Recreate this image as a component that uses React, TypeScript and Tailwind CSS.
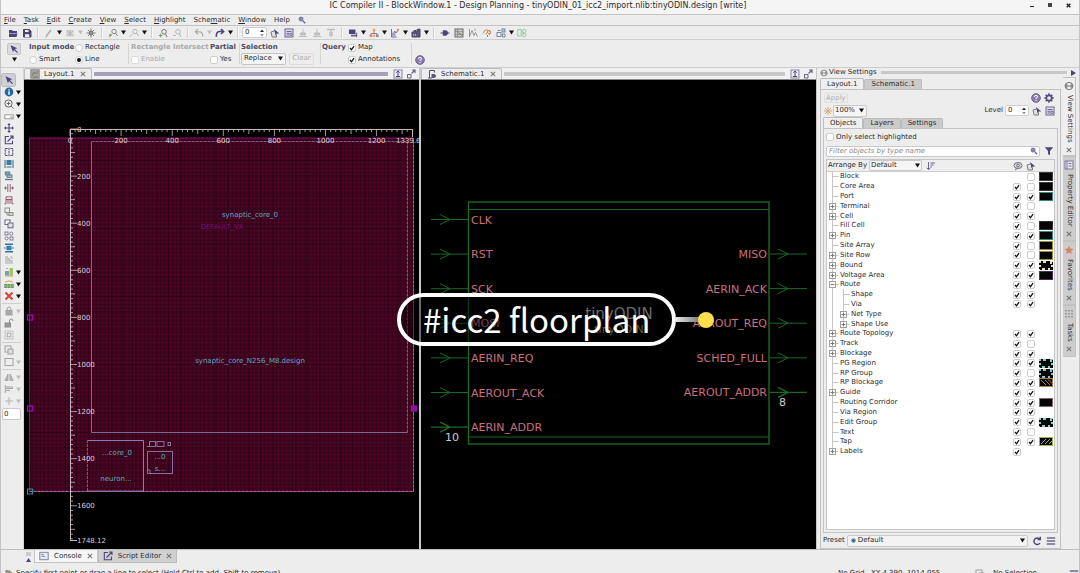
import { useState } from 'react'
import type { ReactNode } from 'react'
import clsx from 'clsx'

const VIOLET = '#4d4378'
const GREY = '#b4b4b4'

// 10x10 glyph box shared by every toolbar icon
function Glyph({ children, color = VIOLET, size = 'size-[10px]' }: { children: ReactNode; color?: string; size?: string }) {
  return (
    <svg viewBox="0 0 10 10" className={clsx(size, 'shrink-0')} fill="none" stroke={color} strokeWidth="1">
      {children}
    </svg>
  )
}

const icons: Record<string, ReactNode> = {
  folder: <Glyph><path d="M1 2h3l1 1h4v2H1z" fill={VIOLET} stroke="none" /><path d="M1 5.5h8.5L8.5 9H1z" fill={VIOLET} stroke="none" /></Glyph>,
  save: <Glyph><path d="M1.5 1.5h6l1.5 1.5v6H1.5z" fill={VIOLET} /><path d="M3 2h3.5v2H3zM3 6.2h4.2V9H3z" fill="#efeff4" stroke="none" /></Glyph>,
  pencil: <Glyph color={GREY}><path d="M2 8.5 7 2" strokeWidth="1.8" /><path d="M1.5 9.2h1.6" /></Glyph>,
  mesh: <Glyph color={GREY}><rect x="1" y="2" width="8" height="6.5" fill="#d8d8d8" stroke="none" /><path d="M2 3l6 5M8 3 2 8M5 2v6.5" /></Glyph>,
  burst: <Glyph color="#555"><path d="M5 .5v9M.5 5h9M2 2l6 6M8 2 2 8" strokeWidth=".8" /><circle cx="5" cy="5" r="1.3" fill="#eee" /></Glyph>,
  zoomNode: <Glyph color="#8a8a80"><circle cx="6" cy="3.5" r="2.2" /><path d="M7.5 5l2 3M3.5 6l-2 2.5" /><path d="M.8 7.2h3M2.3 5.7v3" stroke="#8b9a6a" /></Glyph>,
  zoomNodeOff: <Glyph color={GREY}><circle cx="6" cy="3.5" r="2.2" /><path d="M7.5 5l2 3M3.5 6l-3 3" /></Glyph>,
  nodeAdd: <Glyph color="#777"><circle cx="6" cy="3.8" r="2.3" /><path d="M7.5 6l1.5 3" /><path d="M.8 7.5h3.6M2.6 5.8v3.6" stroke="#6fa06f" /></Glyph>,
  nodeOff: <Glyph color={GREY}><circle cx="6" cy="3.8" r="2.3" /><path d="M7.5 6l1.5 3M1 7.5h3" /></Glyph>,
  undo: <Glyph color="#aaa"><path d="M1.5 3.8h4.5q2.7 0 2.7 4.7M3.8 1.2 1.3 3.8l2.5 2.4" strokeWidth="1.2" /></Glyph>,
  redo: <Glyph><path d="M8.5 3.5H4.2Q1.3 3.5 1.3 8.8M6 1l2.6 2.5L6 6" strokeWidth="1.6" /></Glyph>,
  select: <Glyph color="#777"><path d="M1 4 4.5 3M1 4l1.2 5h4.3V6.5" fill="#e4e4e4" /><path d="M4 1l5.3 4.6-2.5-.1-1.2 2z" fill={VIOLET} stroke="none" /></Glyph>,
  props: <Glyph color="#6d6591"><rect x="1" y="1" width="8" height="8" fill="#e3e0ee" /><path d="M2.5 3.5h5M2.5 5.3h3M2.5 7h3" /><circle cx="7" cy="6.3" r="1.2" /></Glyph>,
  down: <Glyph color="#bdbdbd"><path d="M1 8.5h8M5 1v6M2.5 5h5v2h-5z" fill="#c4c4c4" /></Glyph>,
  downT: <Glyph color="#bdbdbd"><path d="M1 1.5h8M5 2v7M3 5h4M3 7h4" strokeWidth="1.3" /></Glyph>,
  chat: <Glyph><path d="M1 1.5h6.5V6H1z" fill={VIOLET} stroke="none" /><path d="M3 6.8h4.6l1.6-3v5l-1 .6V8.5H3z" fill="#6a6192" stroke="none" /></Glyph>,
  tree: <Glyph color="#9a7f86"><path d="M5 3v2.5M2 7.5V5.5h6v2" /><circle cx="5" cy="2" r="1.5" fill="#e5a76b" stroke="none" /><rect x=".6" y="6.4" width="2.8" height="2.6" fill="#e08a72" stroke="none" /><rect x="4" y="6.4" width="2.2" height="2.6" fill="#e9b36f" stroke="none" /><rect x="7" y="6.4" width="2.6" height="2.6" fill="#8f86ad" stroke="none" /></Glyph>,
  marks: <Glyph color="#736a9c"><path d="M1.5 1v8h5M3.5 6l1-3 1.5 2 2-3" /><circle cx="8" cy="2" r="1.2" fill="#d98d84" stroke="none" /><rect x="2" y="4.5" width="3.5" height="4" fill="#a9a2c6" stroke="none" /></Glyph>,
  chip: <Glyph color="#4b4763"><path d="M1 4h2V2.5h2V4h1V1.5l3-.5v8H1z" fill="#5b5675" /><path d="M2.5 6v2M4.5 6v2" stroke="#b6b2c8" /></Glyph>,
  gate: <Glyph><path d="M.5 5h9" /><path d="M2.8 2.3h2.5Q8 2.6 8 5T5.3 7.7H2.8z" fill={VIOLET} stroke="none" /></Glyph>,
  table: <Glyph color="#6c6c6c"><rect x="1" y="1" width="8" height="8" fill="#cfcfcf" /><path d="M1 3.6h8M1 6.3h8M3.6 1v8" strokeWidth=".6" /><path d="M4.5 4.5l3.5 3" /></Glyph>,
  wave: <Glyph color="#8b8b93"><path d="M1.5 1v8M1.5 8.5l2.5-6 2 5 1.5-3 2 4" strokeWidth=".9" /><path d="M6 2h2" stroke="#86a886" /></Glyph>,
  pulse: <Glyph color="#d08c5f"><path d="M1 5.5 3 2h3l3 2.5L7 7M4 6.5l1.7-3" /><circle cx="7" cy="4" r="1.6" /><path d="M5.5 9V7" stroke="#d2724f" /></Glyph>,
  parts: <Glyph color="#7b8aa5"><rect x="1" y="4.5" width="4" height="4" /><rect x="6" y="1" width="3" height="3" fill="#b8c8dd" /><path d="M1.5 2.5h3M6.5 6h2.5v3H6.5z" /></Glyph>,
  flow: <Glyph color="#9cc7a4"><rect x=".8" y="1.5" width="3.4" height="6.5" /><circle cx="7.3" cy="3" r="1.7" /><circle cx="7.3" cy="7" r="1.7" /><path d="M4 5h2" /></Glyph>,
  cursor: <Glyph><path d="M1.5 1.3 8.3 4.2 5.8 5.1 9 8.4 8.1 9 5 5.9 4 8.3z" fill={VIOLET} stroke="none" /></Glyph>,
  info: <Glyph><circle cx="5" cy="5" r="4.4" fill="#24699a" stroke="none" /><path d="M5 4.3v3.4M5 2.2v1.2" stroke="#fff" strokeWidth="1.4" /></Glyph>,
  zoom: <Glyph color="#666"><circle cx="4.5" cy="4.5" r="3.6" /><path d="M2.8 4.5h3.4M4.5 2.8v3.4M7.2 7.2 9.5 9.5" /></Glyph>,
  ruler: <Glyph color="#999"><rect x=".8" y="3.8" width="8.4" height="4" fill="#fff" /><path d="M6 6h2v2" /></Glyph>,
  move: <Glyph><path d="M5 1v8M1 5h8" strokeWidth="1.1" /><path d="M5 0l1.7 2H3.3zM5 10l1.7-2H3.3zM0 5l2-1.7v3.4zM10 5 8 3.3v3.4z" fill={VIOLET} stroke="none" /></Glyph>,
  resize: <Glyph><path d="M5 1.5H1.3v7.2h7.2V5.5M3.5 6.5 9 1M6 1h3v3" strokeWidth="1.1" /></Glyph>,
  flip: <Glyph><path d="M3.5 1.5H1.2v7h2.3M6.5 1.5h2.3v7H6.5M5 .8v8.4" strokeDasharray="2.4 .7" /></Glyph>,
  align: <Glyph color="#2c6f96"><path d="M1 1v8M9 1v8" /><rect x="2.5" y="1" width="5" height="5" fill="#46789c" stroke="none" /><path d="M2.5 8h5" /></Glyph>,
  stack: <Glyph color="#5f7b8c"><rect x="1.3" y="1" width="4.5" height="2.8" fill="#7fa8bd" /><rect x="3" y="4" width="5" height="2.3" fill="#b4cfa9" /><path d="M1 8.5h8" strokeWidth="1.4" /></Glyph>,
  split: <Glyph color="#8d6b74"><path d="M3.8 1v8M6.2 1v8M0 5h3.5M6.5 5H10M1.5 3.5v3M8.5 3.5v3" /></Glyph>,
  bridge: <Glyph color="#8c4b5d"><path d="M.5 8.8H2V1.8h6v7h1.5M2 4.5h6M4 4.5v4.3M6 4.5v4.3" strokeWidth=".9" /></Glyph>,
  copyGroup: <Glyph color="#8f8f8f"><rect x="1" y="1" width="4.5" height="4.5" /><rect x="5" y="5.5" width="4" height="3" fill="#ddd6b8" /><path d="M3 5.5v2.5h2" /></Glyph>,
  copy: <Glyph color="#666a80"><rect x="1" y="1" width="5" height="4.5" fill="#fff" /><rect x="4" y="4" width="5" height="4.8" fill="#dfe3ea" /></Glyph>,
  quad: <Glyph color="#877e98"><rect x="1" y="1" width="3" height="3" /><circle cx="7.3" cy="2.6" r="1.6" /><circle cx="2.6" cy="7.4" r="1.6" /><rect x="6" y="6" width="3" height="3" /></Glyph>,
  compress: <Glyph color="#2e78a3"><path d="M1 1.3h8M1 8.7h8" strokeWidth="1.4" /><rect x="3" y="3.3" width="4" height="3.4" fill="#3a80a8" /><path d="M0 5h2M8 5h2" /></Glyph>,
  corner: <Glyph color="#b0b0b0"><path d="M1 1h3v2h2v2h3v4H1z" fill="#c9c9c9" stroke="none" /><path d="M3 2l4 4M7 1v2h2" /></Glyph>,
  bars: <Glyph><rect x="1" y="4" width="4" height="4.5" fill="#6fa7a9" stroke="none" /><rect x="5.5" y="1" width="3.5" height="7.5" fill="#a7bd6f" stroke="none" /><path d="M2 1.5h2M1 9h8" stroke="#d9a24f" /></Glyph>,
  row: <Glyph color="#6d9a62"><rect x=".8" y="5.5" width="2" height="3" fill="#9fc08e" /><rect x="4" y="5.5" width="2" height="3" fill="#9fc08e" /><rect x="7.2" y="5.5" width="2" height="3" fill="#9fc08e" /><path d="M1 3.3q4-3 8 0" stroke="#d5a14b" /></Glyph>,
  cross: <Glyph color="#cf4c43"><path d="M1.5 1.5l7 7M8.5 1.5l-7 7" strokeWidth="2.2" /></Glyph>,
  lock: <Glyph color="#a0a0a0"><rect x="2" y="4.5" width="6" height="4.5" fill="#a9a9a9" /><path d="M3.2 4.5V3q0-2 1.8-2t1.8 2v1.5" /></Glyph>,
  unlock: <Glyph color="#8d8d8d"><rect x="1" y="5" width="5.5" height="4" fill="#999" /><path d="M5.5 5V3q0-2 1.8-2t1.7 2" /></Glyph>,
  chipOff: <Glyph color="#aaa"><rect x="1" y="1" width="8" height="8" strokeDasharray="1 .6" /><rect x="3.2" y="3.2" width="3.6" height="3.6" /></Glyph>,
  copyOff: <Glyph color="#a0a0a0"><rect x="1" y="1" width="6" height="6" /><rect x="4" y="4" width="5" height="5" fill="#ddd" /></Glyph>,
  square: <Glyph color="#a3a3a3"><rect x="1" y="1.5" width="8" height="7" /></Glyph>,
  mirror: <Glyph color="#aaa"><path d="M4 2v6.5H.8zM6 2v6.5h3.2z" fill="#b4b4b4" /></Glyph>,
  alignOff: <Glyph color="#a4a4a4"><path d="M1.3 1v8M2 3h6.5v1.5H2M2 6.5h4" /></Glyph>,
  snap: <Glyph color="#b5b5b5"><path d="M5 1v2.5M5 6.5V9M1 5h2.5M6.5 5H9" /><circle cx="5" cy="5" r="1.2" /></Glyph>,
  split2: <Glyph color="#8b84a6"><rect x="1" y="1" width="8" height="8" fill="#ebe9f2" /><path d="M5 2v6M3.4 3.6 5 2l1.6 1.6M3 7.5h4" stroke="#4d4378" /></Glyph>,
  popout: <Glyph color="#6a6480"><path d="M1.5 5.5h3.500v3.500H1.5z" /><path d="M5.5 4.5 9 1M6 1h3v3" strokeWidth="1.2" /></Glyph>,
  help: <Glyph><circle cx="5" cy="5" r="4.3" fill="#8d7fae" stroke="#6c5c93" /><path d="M3.5 4q0-1.7 1.5-1.7T6.5 3.8Q6.5 4.8 5 5.3v.7M5 7v1.2" stroke="#fff" /></Glyph>,
  gear: <Glyph color="#54497f"><circle cx="5" cy="5" r="2.7" strokeWidth="1.7" /><path d="M5 .3v2M5 7.7v2M.3 5h2M7.7 5h2M1.7 1.7 3 3M7 7l1.3 1.3M8.3 1.7 7 3M3 7 1.7 8.3" strokeWidth="1.5" /></Glyph>,
  sun: <Glyph color="#e6a06a"><path d="M5 .8v8.4M.8 5h8.4M2 2l6 6M8 2 2 8" strokeWidth=".9" /></Glyph>,
  funnel: <Glyph><path d="M.8 1.3h8.4L6 5v4.2L4 8V5z" fill={VIOLET} stroke="none" /></Glyph>,
  sort: <Glyph color="#6a6591"><path d="M2.5 1v7.5M.8 6.8l1.7 1.9 1.7-1.9M4.5 2H9M4.5 4h3M4.5 6h1.5" /></Glyph>,
  eye: <Glyph color="#6e6e78"><ellipse cx="5" cy="4.5" rx="4" ry="3" fill="#dcdce2" /><circle cx="5" cy="4.5" r="1.4" /><path d="M2 9l3-2" /></Glyph>,
  reload: <Glyph><path d="M7.8 3.2A3.3 3.3 0 1 0 8 7M8.3.8v2.8H5.5" strokeWidth="1.4" /></Glyph>,
  menu: <Glyph color="#6d678b"><path d="M.8 2h8.4M.8 5h8.4M.8 8h8.4" strokeWidth="1.5" /></Glyph>,
  dock: <Glyph color="#777"><ellipse cx="5" cy="5" rx="4" ry="3.6" /><path d="M1 5h8M2.8 3v4M7.2 3v4" /></Glyph>,
  sheet: <Glyph color="#7d77a0"><rect x="1" y="1" width="8" height="8" fill="#e8e6f1" /><path d="M3 1v8M4.5 3.5h3M4.5 6h3" /></Glyph>,
  star: <Glyph><path d="M5 .6l1.3 3 3.2.3-2.4 2.2.7 3.2L5 7.6 2.2 9.3l.7-3.2L.5 3.9l3.2-.3z" fill="#d9826a" stroke="none" /></Glyph>,
  dots: <Glyph color="#8d8d9b"><path d="M2 1v8M5 1v8M8 1v8" strokeWidth="1.6" strokeDasharray="1.6 1.4" /></Glyph>,
  image: <Glyph color="#8a8a86"><rect x=".8" y=".8" width="8.4" height="8.4" fill="#a8a59b" /><path d="M2 7l2-4 2 2 2-3M3 8h5" stroke="#6f7a76" /></Glyph>,
  schem: <Glyph color="#5a5478"><path d="M2.5 9V1.500h5v2M1 9h4" /><path d="M4.500 5h2.500q2 .3 2 2T7 9H4.500z" fill="#5a5478" stroke="none" /></Glyph>,
  term: <Glyph color="#7f88a0"><rect x=".8" y="1.3" width="8.4" height="7.4" fill="#e6ebf3" /><path d="M2.5 3.5h2M2.5 5.3h3.5" /></Glyph>,
}

function SearchMark() {
  return (
    <Glyph color="#6b6591" size="size-[8px]">
      <circle cx="3.8" cy="3.8" r="2.5" fill="#8c86ab" />
      <path d="M5.8 5.8 9 9" strokeWidth="1.7" />
    </Glyph>
  )
}

function Cross() {
  return (
    <svg viewBox="0 0 6 6" className="size-[6px] shrink-0" fill="none" stroke="#777" strokeWidth="1.1">
      <path d="M.8.8l4.400 4.400M5.200.8.8 5.200" />
    </svg>
  )
}

function Arrow({ off }: { off?: boolean }) {
  return (
    <svg viewBox="0 0 6 5" className="h-[5px] w-[5px] shrink-0">
      <path d="M0 0h6L3 5z" fill={off ? '#bdbdbd' : '#111'} />
    </svg>
  )
}

function Check({ label, checked, off, bare, radio, name }: { label: string; checked?: boolean; off?: boolean; bare?: boolean; radio?: boolean; name?: string }) {
  const [on, setOn] = useState(!!checked)
  return (
    <label className={clsx('flex items-center gap-[2px]', off && 'text-[#a9a9a9]')}>
      <span className="grid size-2 shrink-0 place-items-center">
        <input
          type={radio ? 'radio' : 'checkbox'}
          name={name}
          aria-label={label}
          disabled={off}
          {...(radio ? { defaultChecked: checked } : { checked: on, onChange: () => setOn(!on) })}
          className={clsx(
            'peer col-start-1 row-start-1 size-2 appearance-none border bg-white',
            radio ? 'rounded-full' : 'rounded-[2px]',
            off ? 'border-[#dcdcdc]' : 'border-[#cdcdcd]',
          )}
        />
        {radio ? (
          <span className="pointer-events-none col-start-1 row-start-1 hidden size-1 rounded-full bg-[#111] peer-checked:block" />
        ) : (
          <svg viewBox="0 0 8 8" className="pointer-events-none col-start-1 row-start-1 hidden size-2 peer-checked:block" fill="none" stroke="#111" strokeWidth="1.3">
            <path d="M2 4l1.5 1.8L6 2.2" />
          </svg>
        )}
      </span>
      {!bare && label}
    </label>
  )
}

const menus: [string, string, string][] = [
  ['', 'F', 'ile'], ['', 'T', 'ask'], ['', 'E', 'dit'], ['', 'C', 'reate'], ['', 'V', 'iew'], ['', 'S', 'elect'],
  ['', 'H', 'ighlight'], ['Sche', 'm', 'atic'], ['', 'W', 'indow'], ['Help', '', ''],
]

// "v" is a drop-down arrow, "v-" a disabled one, "|" a group separator, "#" the level spinner
const toolbar = [
  'folder', 'save', '|', 'pencil', 'v', 'mesh', 'v-', 'burst', '|', 'zoomNode', 'v', 'zoomNodeOff', 'v', '|', 'nodeAdd', 'nodeOff', '|',
  'undo', 'v-', 'redo', 'v', '|', '#', 'select', 'props', 'down', 'down', 'downT', '|', 'chat', 'v', 'tree', 'v', 'marks', 'v', 'chip', 'v', '|',
  'gate', 'table', 'wave', 'pulse', 'parts', 'v', 'flow',
]

const sideTools: [string, string?][] = [
  ['cursor'], ['info', 'v'], ['zoom', 'v'], ['ruler', 'v'], ['move'], ['resize'], ['flip'], ['align'], ['stack'], ['split'], ['bridge'],
  ['copyGroup'], ['copy'], ['quad'], ['compress'], ['corner'], ['bars', 'v'], ['row', 'v'], ['cross', 'v'], ['|'],
  ['lock', 'v-'], ['unlock'], ['chipOff'], ['|'], ['copyOff'], ['square', 'v-'], ['|'], ['mirror', 'v-'], ['alignOff', 'v-'], ['snap', 'v-'],
]

function Spinner({ label, width }: { label: string; width: string }) {
  return (
    <span className={clsx('flex h-[11px] shrink-0 items-center rounded-[2px] border border-[#cfcfcf] bg-white px-[2px]', width)}>
      <input aria-label={label} defaultValue="0" className="h-[9px] w-full min-w-0 bg-transparent outline-none" />
      <svg viewBox="0 0 4 8" className="h-2 w-1 shrink-0">
        <path d="M0 3l2-2.5L4 3z" fill="#222" />
        <path d="M0 5l2 2.5L4 5z" fill="#999" />
      </svg>
    </span>
  )
}

function Toolbar() {
  return (
    <div className="flex h-[14px] shrink-0 items-center border-b border-[#cdcdcd] pl-[5px]">
      {toolbar.map((t, i) => {
        if (t === '|') return <span key={i} className="mx-[3px] h-[11px] w-[2px] border-l border-[#d0d0d0] bg-[#f8f8f8]" />
        if (t === '#') return <span key={i} className="mr-px flex"><Spinner label="Hierarchy level" width="w-[25px]" /></span>
        if (t[0] === 'v') return <span key={i} className="flex w-[7px] justify-center"><Arrow off={t === 'v-'} /></span>
        return <button key={i} aria-label={t} className="flex w-[14px] justify-center">{icons[t]}</button>
      })}
    </div>
  )
}

function OptionBar() {
  const divider = 'border-l border-[#d4d4d4] h-[21px]'
  return (
    <div className="flex h-[28px] shrink-0 items-center border-b border-[#cdcdcd] pl-[6px]">
      <button aria-label="Select tool" className="flex h-[21px] w-[14px] flex-col items-center gap-[2px]">
        <span className="rounded-[2px] border border-[#c3c3c3] bg-[#dcdcdf] px-px">{icons.cursor}</span>
        <Arrow />
      </button>
      <fieldset className="ml-[8px] grid w-[99px] grid-cols-[46px_auto] gap-y-[3px]">
        <b className="text-[#4f4b60]">Input mode</b>
        <Check radio name="mode" label="Rectangle" />
        <Check radio name="mode" label="Smart" />
        <Check radio name="mode" label="Line" checked />
      </fieldset>
      <div className={divider} />
      <div className="ml-[2px] flex w-[79px] flex-col gap-[3px] whitespace-nowrap">
        <b className="text-[#a9a9a9]">Rectangle Intersect</b>
        <Check label="Enable" off />
      </div>
      <div className="flex w-[29px] flex-col gap-[3px]">
        <b className="text-[#4f4b60]">Partial</b>
        <Check label="Yes" />
      </div>
      <div className={divider} />
      <div className="ml-px flex w-[79px] flex-col gap-px">
        <b className="text-[#4f4b60]">Selection</b>
        <div className="flex items-center gap-[3px]">
          <span className="relative flex h-[12px] w-[45px] items-center rounded-[2px] border border-[#c4c4c4] bg-[#f4f4f4]">
            <select aria-label="Selection" className="h-[10px] w-full appearance-none bg-transparent pl-[2px] outline-none"><option>Replace</option></select>
            <span className="pointer-events-none absolute right-[2px]"><Arrow /></span>
          </span>
          <button disabled className="h-[12px] w-[25px] rounded-[2px] border border-[#dcdcdc] text-[#aaa]">Clear</button>
        </div>
      </div>
      <div className={divider} />
      <div className="ml-px grid w-[89px] grid-cols-[26px_auto] gap-y-[3px]">
        <b className="text-[#4f4b60]">Query</b>
        <Check label="Map" checked />
        <span />
        <Check label="Annotations" checked />
      </div>
      <div className={divider} />
      <button aria-label="Help" className="mt-[12px] ml-[3px] flex">{icons.help}</button>
    </div>
  )
}

function SideBar() {
  return (
    <aside className="flex w-[23px] shrink-0 flex-col border-r border-[#d6d6d6] pt-[6px] pl-px">
      {sideTools.map(([name, drop], i) =>
        name === '|' ? (
          <span key={i} className="my-px mr-[2px] h-px bg-[#cfcfcf]" />
        ) : (
          <div key={i} className="flex h-[12px] items-center">
            <button aria-label={name} className={clsx('flex w-[13px] justify-center rounded-[2px] py-px', i === 0 && 'bg-[#cfcfd6] ring-1 ring-[#bbb]')}>{icons[name]}</button>
            {drop && <span className="pl-px"><Arrow off={drop === 'v-'} /></span>}
          </div>
        ),
      )}
      <input aria-label="Offset" defaultValue="0" className="mt-px h-[12px] w-[19px] rounded-[2px] border border-[#c9c9c9] bg-white pl-px outline-none" />
    </aside>
  )
}

function DockHeader({ icon, title, active }: { icon: string; title: string; active?: boolean }) {
  return (
    <div className="flex h-[12px] shrink-0 items-center border-b border-[#8a8a8a] bg-[#f1f1f3]">
      <button className="flex h-full shrink-0 items-center gap-[4px] rounded-t-[2px] border border-b-0 border-[#bdbdbd] bg-[#ededed] px-[5px]">
        {icons[icon]}
        <span className="pr-[2px]">{title}</span>
        <Cross />
      </button>
      <span className={clsx('mx-[2px] h-[4px] flex-1', active ? 'bg-[#a79dbd]' : 'bg-[#c8c8c8]')} />
      <span className="flex gap-[3px] px-[3px]">
        {icons.split2}
        {icons.popout}
      </span>
    </div>
  )
}

const UX = 51.1 / 200
const UY = 47.1 / 200

function LayoutCanvas() {
  const hTicks = Array.from({ length: 67 }, (_, i) => i * 20)
  const vTicks = Array.from({ length: 88 }, (_, i) => i * 20)
  const len = (v: number) => (v % 200 === 0 ? 7 : v % 100 === 0 ? 5 : 3)
  return (
    <svg viewBox="0 0 395 469" className="min-h-0 w-full flex-1 bg-black text-[7px]">
      <defs>
        <pattern id="mesh" width="4" height="4" patternUnits="userSpaceOnUse">
          <rect width="4" height="4" fill="#4c0021" />
          <path d="M0 .5h4M.5 0v4" stroke="#37051c" />
          <path d="M2.5 2v1" stroke="#5b1033" />
        </pattern>
        <pattern id="bands" width="46" height="34" patternUnits="userSpaceOnUse">
          <path d="M6.5 0v34M19.5 0v34M41.5 0v34" stroke="#1c0010" strokeOpacity=".4" />
          <path d="M0 12.5h46M0 27.5h46" stroke="#180010" strokeOpacity=".25" />
        </pattern>
      </defs>
      <rect x="5.5" y="58" width="384" height="353.5" fill="url(#mesh)" />
      <rect x="5.5" y="58" width="384" height="353.5" fill="url(#bands)" stroke="#860f68" />
      <path d="M5.5 411.5h384V58" fill="none" stroke="#a7669e" strokeDasharray="3 1" />
      <path d="M67.5 61.5V352.5H383.5" fill="none" stroke="#776c92" />
      <path d="M67.5 61.5H383.5V352.5" fill="none" stroke="#7c5c84" strokeDasharray="3 1" />
      <path d="M63.5 411V360.5H119.5" fill="none" stroke="#655d8d" strokeDasharray="3 1" />
      <path d="M63.5 360.5H119.5V411" fill="none" stroke="#7d84b4" />
      <path d="M63.5 411h56" stroke="#7d84b4" strokeDasharray="3 1" />
      <g fill="none" stroke="#83709e">
        <rect x="123.5" y="371.5" width="25" height="22" />
        <rect x="125.5" y="361.5" width="6" height="5" />
        <rect x="133" y="361.5" width="7" height="5" />
        <rect x="144" y="362.5" width="2.5" height="3" />
        <path d="M123 366.5h2M124 390h2v3" />
      </g>
      <g fill="none" stroke="#9410a8" strokeWidth="1.3">
        <rect x="3.5" y="235" width="5" height="5" />
        <rect x="3.5" y="326" width="5" height="5" />
        <rect x="387.5" y="326" width="5" height="5" fill="#8a0fa0" />
      </g>
      <rect x="3.5" y="409" width="5" height="5" fill="none" stroke="#3c8ea2" />

      {/* rulers */}
      <g stroke="#c9b6bf" strokeWidth="1">
        <path d="M46.5 460V49.5H389" fill="none" />
        {hTicks.map(v => <path key={v} d={`M${46 + v * UX} 49v${len(v)}`} strokeOpacity=".8" />)}
        {vTicks.map(v => <path key={v} d={`M46 ${49 + v * UY}h${len(v)}`} strokeOpacity=".8" />)}
        <path d="M388.5 49v8M46 460.5h7" />
      </g>
      <g fill="#dccdd4">
        {[0, 200, 400, 600, 800, 1000, 1200].map(v => <text key={v} x={46 + v * UX} y="63" textAnchor="middle">{v}</text>)}
        <text x="372" y="63">1339.6</text>
        {[0, 200, 400, 600, 800, 1000, 1200, 1400, 1600].map(v => <text key={v} x="53" y={51.5 + v * UY}>{v}</text>)}
        <text x="53" y="463">1748.12</text>
      </g>
      <g fill="#5aa9c4" textAnchor="middle">
        <text x="226" y="137">synaptic_core_0</text>
        <text x="226" y="283">synaptic_core_N256_M8.design</text>
        <text x="93" y="375">...core_0</text>
        <text x="92" y="401">neuron...</text>
        <text x="136" y="379">...0</text>
        <text x="136" y="391">s...</text>
      </g>
      <text x="198" y="149" textAnchor="middle" fill="#7d0c6c">DEFAULT_VA</text>
    </svg>
  )
}

const inputs = ['CLK', 'RST', 'SCK', 'MOSI', 'AERIN_REQ', 'AEROUT_ACK', 'AERIN_ADDR']
const outputs = ['MISO', 'AERIN_ACK', 'AEROUT_REQ', 'SCHED_FULL', 'AEROUT_ADDR']

function Pin({ x, y, bus }: { x: number; y: number; bus?: boolean }) {
  return <path d={`M${x} ${y}h38M${x + 9} ${y - 5}l10 5-10 5`} strokeWidth={bus ? 1.4 : 1} />
}

function SchematicCanvas() {
  return (
    <svg viewBox="0 0 395 469" className="min-h-0 w-full flex-1 bg-black text-[11px]">
      <g fill="none" stroke="#1c6823">
        <rect x="47.5" y="122" width="300.5" height="242" strokeWidth="1.4" />
        <path d="M48 129.5h300M48 357h300" />
        {inputs.map((n, i) => <Pin key={n} x={10} y={139.5 + i * 34.6} bus={i === 6} />)}
        {outputs.map((n, i) => <Pin key={n} x={348} y={174 + i * 34.6} bus={i === 4} />)}
      </g>
      <g fill="#c9707c">
        {inputs.map((n, i) => <text key={n} x="50" y={143.5 + i * 34.6}>{n}</text>)}
        {outputs.map((n, i) => <text key={n} x="346" y={178 + i * 34.6} textAnchor="end">{n}</text>)}
      </g>
      <g fill="#cfcfcf">
        <text x="24" y="361">10</text>
        <text x="358" y="326">8</text>
      </g>
      <text x="198" y="239" textAnchor="middle" fill="#c2c2c2" className="text-[15px]">tinyODIN</text>
      <text x="198" y="253" textAnchor="middle" fill="#b5a52c">tinyODIN</text>
    </svg>
  )
}

// name, indent, expander, visible, selectable, swatch frame, swatch texture
type Row = [string, number, '' | '+' | '-', boolean | null, boolean | null, string?, string?]
const rows: Row[] = [
  ['Block', 0, '', null, false, '#3a3a3a'],
  ['Core Area', 0, '', true, false, '#3a3a3a'],
  ['Port', 0, '', true, true, '#2f8a84'],
  ['Terminal', 0, '+', true, false],
  ['Cell', 0, '+', true, true],
  ['Fill Cell', 0, '', true, false, '#333333'],
  ['Pin', 0, '+', true, true, '#2f8a84'],
  ['Site Array', 0, '', true, false, '#9b8a3c'],
  ['Site Row', 0, '+', true, false, '#9b8a3c'],
  ['Bound', 0, '+', true, true, '#e4e49a', 'blob'],
  ['Voltage Area', 0, '+', true, true, '#4c2a5a'],
  ['Route', 0, '-', true, true],
  ['Shape', 1, '', true, true],
  ['Via', 1, '', true, true],
  ['Net Type', 1, '+', null, null],
  ['Shape Use', 1, '+', null, null],
  ['Route Topology', 0, '+', true, true],
  ['Track', 0, '+', true, false],
  ['Blockage', 0, '+', true, true],
  ['PG Region', 0, '', true, true, '#7fd0c6', 'blob'],
  ['RP Group', 0, '', true, false, '#7cc6d2', 'blob'],
  ['RP Blockage', 0, '', true, true, '#a87c48', 'back'],
  ['Guide', 0, '+', true, true],
  ['Routing Corridor', 0, '', true, true, '#8c6474'],
  ['Via Region', 0, '', true, true],
  ['Edit Group', 0, '', true, true, '#7fd0c6', 'blob'],
  ['Text', 0, '', true, false],
  ['Tap', 0, '', true, true, '#a9b23e', 'slash'],
  ['Labels', 0, '+', true, null],
]

function Swatch({ frame, texture }: { frame: string; texture?: string }) {
  return (
    <svg viewBox="0 0 14 9" className="block h-[9px] w-[14px]">
      {texture === 'blob' ? (
        <>
          <rect width="14" height="9" fill="#050505" />
          <path d="M0 0h2v2H0zM4 0h3v2H4zM11 0h3v1h-1v2h-2zM0 4h2v2H0zM12 4h2v2h-2zM3 7h3v2H3zM9 7h2v2H9zM0 8h1v1H0z" fill={frame} />
        </>
      ) : (
        <rect x=".5" y=".5" width="13" height="8" fill="#050505" stroke={frame} />
      )}
      {texture === 'back' && <path d="M2 2l5 5M6 2l5 5M9 1.5l4 4" stroke={frame} />}
      {texture === 'slash' && <path d="M2 7l5-5M6 7l5-5M10 7l3-3" stroke={frame} />}
    </svg>
  )
}

function Branch({ indent, mark, last, inner }: { indent: number; mark: string; last: boolean; inner: boolean }) {
  const x = indent ? 16.5 : 5.5
  return (
    <svg viewBox="0 0 23 9" className={clsx('h-[9px] shrink-0 overflow-visible', indent ? 'w-[23px]' : 'w-[12px]')} preserveAspectRatio="xMinYMid slice" fill="none" stroke="#c6c6c6">
      <path d={`M5.5-1V${last ? 4 : 10}`} />
      {inner && <path d="M16.5-1V10" />}
      <path d={`M${x} 4.5h6`} />
      {mark && (
        <>
          <rect x={x - 3} y="1.5" width="6" height="6" fill="#fff" stroke="#a0a0a0" />
          <path d={mark === '+' ? `M${x - 2} 4.5h4M${x} 2.5v4` : `M${x - 2} 4.5h4`} stroke="#777" />
        </>
      )}
    </svg>
  )
}

function ObjectTable() {
  return (
    <table className="h-[285px] w-full border-collapse">
      <tbody>
        {rows.map(([name, indent, mark, vis, sel, frame, texture], i) => (
          <tr key={name}>
            <td className="p-0">
              <div className="flex h-[9px] items-center gap-px leading-[9px]">
                <Branch indent={indent} mark={mark} last={i === rows.length - 1} inner={indent === 1} />
                {name}
              </div>
            </td>
            <td className="w-[12px] p-0">{vis !== null && <Check bare label={`${name} visible`} checked={vis} />}</td>
            <td className="w-[13px] p-0 pl-[2px]">{sel !== null && <Check bare label={`${name} selectable`} checked={sel} />}</td>
            <td className="w-[16px] p-0 pl-px">{frame && <Swatch frame={frame} texture={texture} />}</td>
          </tr>
        ))}
      </tbody>
    </table>
  )
}

function Tabs({ names }: { names: string[] }) {
  return (
    <div className="flex h-[11px] shrink-0 items-end">
      {names.map((n, i) => (
        <button key={n} className={clsx('rounded-t-[2px] border border-b-0 border-[#bcbcbc] px-[6px]', i === 0 ? 'h-[11px] bg-[#efefef]' : 'h-[10px] bg-[#cbcbcb]')}>{n}</button>
      ))}
    </div>
  )
}

const railTabs: [string, string, string][] = [
  ['dock', 'View Settings', 'h-[79px] bg-[#efefef]'],
  ['sheet', 'Property Editor', 'h-[85px] bg-[#cdcdcd]'],
  ['star', 'Favorites', 'h-[64px] bg-[#cdcdcd]'],
  ['dots', 'Tasks', 'h-[52px] bg-[#cdcdcd]'],
]

function SettingsPanel() {
  return (
    <section className="flex w-[263px] shrink-0 flex-col border-l border-[#c6c6c6] pl-[3px]">
      <header className="flex h-[9px] shrink-0 items-center gap-px pr-[3px]">
        <Glyph color="#777" size="size-[8px]"><ellipse cx="5" cy="5" rx="4" ry="3.6" /><path d="M1 5h8M2.8 3v4M7.2 3v4" /></Glyph>
        <h2>View Settings</h2>
        <span className="mx-[3px] h-[3px] flex-1 bg-[#c8c8c8]" />
        <svg viewBox="0 0 5 6" className="h-[6px] w-[5px]"><path d="M0 0l5 3-5 3z" fill={VIOLET} /></svg>
      </header>
      <div className="flex min-h-0 flex-1">
        <div className="flex min-w-0 flex-1 flex-col pt-px">
          <Tabs names={['Layout.1', 'Schematic.1']} />
          <div className="flex min-h-0 flex-1 flex-col border border-[#c2c2c2] px-[2px] pt-[2px]">
            <div className="flex h-[12px] shrink-0 items-center justify-between px-px">
              <button disabled className="h-[10px] rounded-[2px] border border-[#e0e0e0] px-px leading-[8px] text-[#b0b0b0]">Apply</button>
              <span className="flex gap-[3px] pr-[3px]">{icons.help}{icons.gear}</span>
            </div>
            <div className="flex h-[13px] shrink-0 items-center">
              {icons.sun}
              <span className="relative flex h-[12px] w-[34px] items-center rounded-[2px] border border-[#c9c9c9] bg-[#f5f5f5]">
                <select aria-label="Brightness" className="h-[10px] w-full appearance-none bg-transparent pl-px outline-none"><option>100%</option></select>
                <span className="pointer-events-none absolute right-[2px]"><Arrow /></span>
              </span>
              <span className="ml-auto pr-[2px]">Level</span>
              <Spinner label="Level" width="w-[24px]" />
              <span className="flex gap-[3px] pr-[3px] pl-[3px]">{icons.select}{icons.props}</span>
            </div>
            <Tabs names={['Objects', 'Layers', 'Settings']} />
            <div className="flex min-h-0 flex-1 flex-col border border-[#c2c2c2] px-[2px] pb-[2px]">
              <div className="flex h-[16px] shrink-0 items-center"><Check label="Only select highlighted" /></div>
              <div className="flex h-[12px] shrink-0 items-center gap-[4px] pr-px">
                <span className="flex h-[11px] flex-1 items-center rounded-[2px] border border-[#c9c9c9] bg-white pr-px">
                  <input aria-label="Filter objects" placeholder="Filter objects by type name" className="h-[9px] w-full bg-transparent pl-[2px] italic outline-none placeholder:text-[#888]" />
                  <SearchMark />
                </span>
                {icons.funnel}
              </div>
              <div className="mt-[2px] flex min-h-0 flex-1 flex-col border border-[#c6c6c6] bg-white">
                <div className="flex h-[12px] shrink-0 items-center border-b border-[#cfcfcf] bg-[#eeeeee] pl-px">
                  <label htmlFor="arrange" className="pr-[2px]">Arrange By</label>
                  <span className="relative flex h-[11px] w-[53px] items-center rounded-[2px] border border-[#c9c9c9] bg-[#f5f5f5]">
                    <select id="arrange" className="h-[9px] w-full appearance-none bg-transparent pl-px outline-none"><option>Default</option></select>
                    <span className="pointer-events-none absolute right-px"><Arrow /></span>
                  </span>
                  <span className="flex-1 pl-[4px]">{icons.sort}</span>
                  <span className="flex gap-[3px] pr-[18px]">{icons.eye}{icons.select}</span>
                </div>
                <ObjectTable />
              </div>
            </div>
            <div className="flex h-[15px] shrink-0 items-center gap-[2px]">
              <label htmlFor="preset">Preset</label>
              <span className="relative flex h-[12px] flex-1 items-center rounded-[2px] border border-[#c9c9c9] bg-[#f3f3f3]">
                <span className="ml-[3px] size-[5px] rounded-full border border-[#8ab0c8] bg-[#2d6f9c]" />
                <select id="preset" className="h-[10px] flex-1 appearance-none bg-transparent pl-[2px] outline-none"><option>Default</option></select>
                <span className="pointer-events-none absolute right-[2px]"><Arrow /></span>
              </span>
              <span className="flex gap-[4px] px-[2px]">{icons.reload}{icons.menu}</span>
            </div>
          </div>
        </div>
        <nav className="flex w-[18px] shrink-0 flex-col pl-[2px]">
          {railTabs.map(([icon, name, look]) => (
            <button key={name} className={clsx('flex w-[13px] flex-col items-center gap-[4px] border border-l-0 border-[#c2c2c2] pt-[3px] pb-[4px]', look)}>
              {icons[icon]}
              <span className="whitespace-nowrap [writing-mode:vertical-rl]">{name}</span>
              <span className="mt-auto"><Cross /></span>
            </button>
          ))}
        </nav>
      </div>
    </section>
  )
}

export default function App() {
  return (
    <div className="relative flex h-screen flex-col overflow-hidden border-x border-[#c4c4c4] bg-[#ededed] font-['DejaVu_Sans',sans-serif] text-[7px] leading-[9px] text-[#2c2c2c]">
      <header className="flex h-[14px] shrink-0 items-center bg-[#f5f5f5] pb-[4px]">
        <span className="w-[46px]" />
        <h1 className="flex-1 text-center text-[8px]">IC Compiler II - BlockWindow.1 - Design Planning - tinyODIN_01_icc2_import.nlib:tinyODIN.design [write]</h1>
        <span className="flex w-[50px] items-center justify-end gap-[14px] pr-[8px]">
          <button aria-label="Minimize" className="mt-[3px] h-px w-[4px] shrink-0 bg-[#222]" />
          <button aria-label="Maximize" className="size-[4px] shrink-0 bg-[#444]" />
          <button aria-label="Close">
            <svg viewBox="0 0 6 6" className="size-[5px]" stroke="#222" strokeWidth="1.6"><path d="M.8.8l4.4 4.4M5.2.8.8 5.2" /></svg>
          </button>
        </span>
      </header>
      <nav className="flex h-[12px] shrink-0 items-center gap-[8px] border-y border-[#c4c4c4] pl-[3px]">
        {menus.map(([a, b, c]) => (
          <button key={a + b + c}>{a}<u>{b}</u>{c}</button>
        ))}
        <SearchMark />
      </nav>
      <Toolbar />
      <OptionBar />
      <main className="flex min-h-0 flex-1 border-b border-[#bdbdbd]">
        <SideBar />
        <div className="flex min-w-0 flex-1 gap-[2px] bg-[#c9c9c9]">
          <div className="flex min-w-0 flex-1 flex-col">
            <DockHeader icon="image" title="Layout.1" active />
            <LayoutCanvas />
          </div>
          <div className="flex min-w-0 flex-1 flex-col">
            <DockHeader icon="schem" title="Schematic.1" />
            <SchematicCanvas />
          </div>
        </div>
        <SettingsPanel />
      </main>
      <div className="flex h-[13px] shrink-0 items-center pl-[25px]">
        <svg viewBox="0 0 5 10" className="mr-[3px] h-[10px] w-[5px]"><path d="M0 0h5v4H0z" fill="#ccc" /><path d="M0 10l2.5-4L5 10z" fill={VIOLET} /></svg>
        <button className="flex h-full items-center gap-[5px] border border-t-0 border-[#c4c4c4] bg-[#f6f6f6] px-[4px]">{icons.term}Console<Cross /></button>
        <button className="flex h-full items-center gap-[5px] border border-t-0 border-[#bdbdbd] bg-[#d0d0d0] px-[4px]">{icons.resize}Script Editor<Cross /></button>
      </div>
      <footer className="flex h-[10px] shrink-0 items-start overflow-hidden pt-[6px] pl-[4px] whitespace-nowrap">
        <Glyph color="#8b7c6c" size="size-[8px]"><path d="M1 2h3v6H1zM5 2l4 3-4 3z" fill="#a89c86" /></Glyph>
        <span className="flex-1 pl-[3px]">Specify first point or drag a line to select (Hold Ctrl to add, Shift to remove)</span>
        <span className="w-[137px]">No Grid &nbsp; XY 4.390, 1014.055</span>
        <span className="w-[18px]">{icons.copyOff}</span>
        <span className="w-[76px]">No Selection</span>
        {icons.menu}
      </footer>

      {/* caption callout */}
      <div className="absolute top-[293px] left-[396px] flex items-center">
        <div className="flex h-[53px] items-center rounded-full border-4 border-white bg-black/45 px-[22px] font-['Noto_Sans_CJK_SC',sans-serif] text-[33px] leading-none font-normal text-white">
          #icc2 floorplan
        </div>
        <span className="h-[5px] w-[25px] bg-linear-to-r from-[#e6e6e6] to-[#777]" />
        <span className="-ml-[3px] size-4 rounded-full bg-[#ffdf4d]" />
      </div>
    </div>
  )
}
